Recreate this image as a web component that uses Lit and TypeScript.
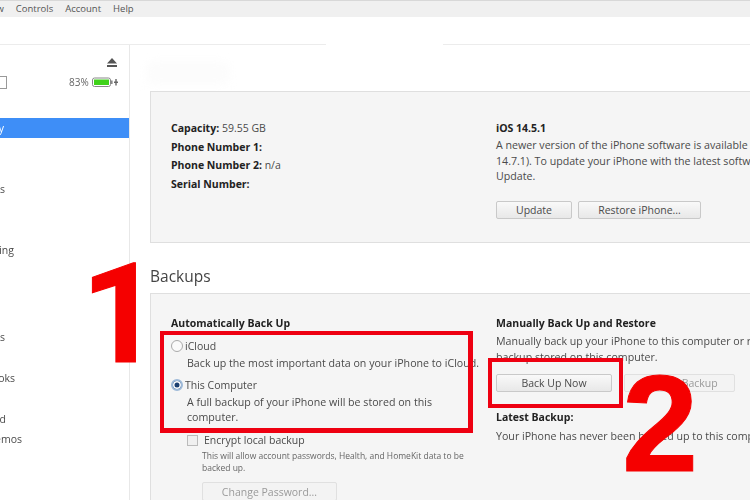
import { LitElement, html, css, svg } from "lit";
import { customElement } from "lit/decorators.js";

const NAV = [
  { label: "Summary", end: 4, gap: 41, selected: true },
  { label: "Apps", end: 5, gap: 41 },
  { label: "File Sharing", end: 14, gap: 67 },
  { label: "TV Shows", end: 5, gap: 21 },
  { label: "Books", end: 15, gap: 21 },
  { label: "Purchased", end: 6, gap: 0 },
  { label: "Voice Memos", end: 22, gap: 0 },
];

@customElement("app-root")
export class AppRoot extends LitElement {
  static styles = css`
    :host { display: block; width: 750px; height: 500px; overflow: hidden; position: relative; background: #fff;
      font-family: "Open Sans", "Noto Sans", sans-serif; font-size: 10.5px; color: #4a4a4a; }
    .page { width: 750px; height: 500px; display: flex; flex-direction: column; filter: blur(0.35px); }
    .menu { height: 17px; flex: none; box-sizing: border-box; border-top: 1px solid #d8d8d8; background: #f0f0f0;
      display: flex; align-items: center; gap: 12px; padding-bottom: 1px; font-size: 9.5px; color: #555; overflow: hidden; }
    .menu .clip { margin-left: -17px; }
    .toolbar { height: 28px; flex: none; box-sizing: border-box; border-bottom: 1px solid #ececec; position: relative; }
    .gap { position: absolute; left: 326px; top: 26px; width: 117px; height: 3px; background: #fff; }
    .body { flex: 1; display: flex; min-height: 0; }
    .side { width: 130px; flex: none; box-sizing: border-box; border-right: 1px solid #e8e8e8; overflow: hidden; padding-top: 13px; }
    .eject { display: block; margin-left: 106px; }
    .device { display: flex; align-items: center; height: 16px; margin-top: 6px; position: relative; }
    .phone { width: 7px; height: 13px; box-sizing: border-box; border: 1px solid #999; border-left: none; flex: none; }
    .pct { margin-left: 62px; font-size: 10px; color: #666; width: 21px; }
    .batt { margin-left: 2px; }
    .nav { margin-top: 28px; }
    .row { height: 20px; display: flex; align-items: center; white-space: nowrap; font-size: 10.5px; color: #4a4a4a; }
    .row.sel { background: #3e8ef7; color: #fff; }
    .row span { display: flex; justify-content: flex-end; flex: none; }
    .main { flex: 1; min-width: 0; padding: 46px 0 0 20px; overflow: hidden; position: relative; }
    .smudge { position: absolute; left: 16px; top: 16px; width: 84px; height: 24px; background: #fcfcfc; filter: blur(4px); border-radius: 8px; }
    .panel { background: #f5f5f5; border: 1px solid #dfdfdf; border-right: none; box-sizing: border-box; display: grid;
      grid-template-columns: 325px 1fr; padding-left: 20px; overflow: hidden; position: relative; }
    .info { height: 152px; padding-top: 27px; }
    .facts { line-height: 18.6px; }
    b { color: #222; font-weight: 700; }
    .col { min-width: 0; white-space: nowrap; }
    .copy { line-height: 15.5px; font-size: 10.65px; }
    .h { line-height: 18px; }
    .info .copy { margin-top: 1px; }
    .btns { display: flex; gap: 6px; }
    .btn { box-sizing: border-box; height: 18px; display: flex; align-items: center; justify-content: center; flex: none;
      border: 1px solid #c9c9c9; border-radius: 2px; background: linear-gradient(#f9f9f9, #e8e8e8); color: #4a4a4a; }
    .info .btns { margin-top: 16px; }
    .u { width: 76px; } .r { width: 123px; }
    h2 { margin: 23px 0 6px; font-weight: 400; font-size: 15.5px; line-height: 21px; color: #444; }
    .backup { height: 220px; padding-top: 20px; }
    .opt { display: flex; align-items: center; line-height: 16px; }
    .radio { width: 12px; height: 12px; box-sizing: border-box; border-radius: 50%; border: 1px solid #aaa; background: #fafafa; margin-right: 2px; flex: none; }
    .radio.on { border: 2px solid #9db9d8; background: #1b3f70; box-shadow: inset 0 0 0 1.5px #fff; }
    .desc { margin-left: 16px; line-height: 15px; margin-top: 2px; font-size: 10.65px; }
    .check { display: flex; align-items: center; margin: 7px 0 0 16px; line-height: 16px; }
    .box { width: 11px; height: 11px; box-sizing: border-box; border: 1px solid #bbb; background: #f0f0f0; margin-right: 6px; }
    .small { margin: 2px 0 0 31px; font-size: 8.5px; line-height: 12px; color: #666; }
    .pw { width: 135px; height: 19px; margin: 8px 0 0 31px; color: #777; }
    .dim { color: #9a9a9a; border-color: #e0e0e0; background: #f3f3f3; }
    .bn { width: 116px; } .rb { width: 111px; }
    .right .copy { margin-top: 2px; }
    .right .btns { gap: 12px; margin-top: 9px; }
    .red { position: absolute; box-sizing: border-box; border: 4px solid #ee0011; }
    .r1 { left: 160px; top: 331px; width: 313px; height: 102px; border-width: 4px 5px 5px 4px; }
    .r2 { left: 488px; top: 358px; width: 135px; height: 50px; }
    .num { position: absolute; font-family: "Liberation Sans", Arial, sans-serif; font-weight: 700; color: #f50000; font-size: 137px; line-height: 137px; }
    .n1 { left: 81px; top: 245px; font-family: Roboto, "Liberation Sans", sans-serif; font-size: 139px; line-height: 139px; -webkit-text-stroke: 1px #f50000; }
    .n2 { left: 622px; top: 355px; -webkit-text-stroke: 1px #f50000; }
  `;

  render() {
    return html`
      <div class="page">
        <div class="menu"><span class="clip">View</span><span>Controls</span><span>Account</span><span>Help</span></div>
        <div class="toolbar"><div class="gap"></div></div>
        <div class="body">
          <div class="side">
            <svg class="eject" width="12" height="10" viewBox="0 0 12 10">
              <path d="M6 0 L11 5.5 H1 Z M1 7 H11 V9 H1 Z" fill="#555"></path>
            </svg>
            <div class="device">
              <div class="phone"></div>
              <div class="pct">83%</div>
              <svg class="batt" width="27" height="11" viewBox="0 0 27 11">
                ${svg`<rect x="0.5" y="1" width="18" height="8.5" rx="2" fill="#fff" stroke="#888"></rect>
                <rect x="2" y="2.5" width="15" height="5.5" fill="#3fd21a"></rect>
                <rect x="19" y="3.5" width="1.6" height="3.5" fill="#888"></rect>
                <path d="M24 2 V8.5 M22 5.2 H26" stroke="#666" stroke-width="1.4"></path>`}
              </svg>
            </div>
            <div class="nav">
              ${NAV.map((n) => html`<div class="row ${n.selected ? "sel" : ""}" style="margin-bottom:${n.gap}px"><span style="width:${n.end}px">${n.label}</span></div>`)}
            </div>
          </div>
          <div class="main">
            <div class="smudge"></div>
            <div class="panel info">
              <div class="col facts">
                <div><b>Capacity:</b> 59.55 GB</div>
                <div><b>Phone Number 1:</b></div>
                <div><b>Phone Number 2:</b> n/a</div>
                <div><b>Serial Number:</b></div>
              </div>
              <div class="col">
                <div class="h"><b>iOS 14.5.1</b></div>
                <div class="copy">A newer version of the iPhone software is available (version<br />14.7.1). To update your iPhone with the latest software, click<br />Update.</div>
                <div class="btns"><div class="btn u">Update</div><div class="btn r">Restore iPhone...</div></div>
              </div>
            </div>
            <h2>Backups</h2>
            <div class="panel backup">
              <div class="col">
                <div class="h"><b>Automatically Back Up</b></div>
                <div class="opt" style="margin-top:6px"><div class="radio"></div>iCloud</div>
                <div class="desc">Back up the most important data on your iPhone to iCloud.</div>
                <div class="opt" style="margin-top:6px"><div class="radio on"></div>This Computer</div>
                <div class="desc">A full backup of your iPhone will be stored on this<br />computer.</div>
                <div class="check"><div class="box"></div>Encrypt local backup</div>
                <div class="small">This will allow account passwords, Health, and HomeKit data to be<br />backed up.</div>
                <div class="btn pw dim">Change Password...</div>
              </div>
              <div class="col right">
                <div class="h"><b>Manually Back Up and Restore</b></div>
                <div class="copy">Manually back up your iPhone to this computer or restore a<br />backup stored on this computer.</div>
                <div class="btns"><div class="btn bn">Back Up Now</div><div class="btn rb dim">Restore Backup</div></div>
                <div class="h" style="margin-top:16px"><b>Latest Backup:</b></div>
                <div class="copy" style="margin-top:3px">Your iPhone has never been backed up to this computer.</div>
              </div>
            </div>
          </div>
        </div>
      </div>
      <div class="red r1"></div>
      <div class="red r2"></div>
      <div class="num n1">1</div>
      <div class="num n2">2</div>
    `;
  }
}
